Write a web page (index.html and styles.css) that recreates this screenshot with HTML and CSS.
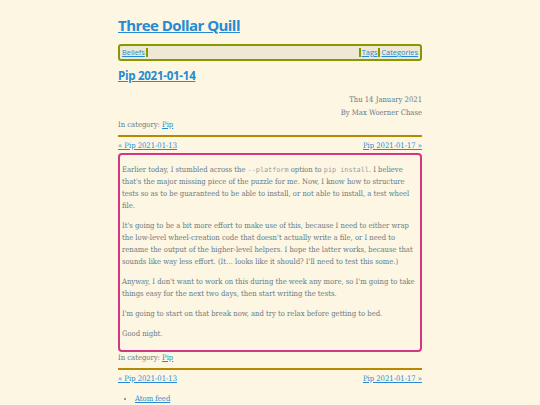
FILE: index.html
```html
<!DOCTYPE html>
<html>
<head>
<meta charset="utf-8">
<title>Pip 2021-01-14</title>
<link rel="stylesheet" href="styles.css">
</head>
<body>
<div class="page">
  <header class="site-header">
    <h1 class="site-title"><a href="#">Three Dollar Quill</a></h1>
    <nav class="site-nav">
      <a class="nav-item" href="#">Beliefs</a>
      <span class="nav-fill"></span>
      <a class="nav-item nav-sep" href="#">Tags</a>
      <a class="nav-item nav-sep" href="#">Categories</a>
    </nav>
  </header>
  <article class="post">
    <h2 class="post-title"><a href="#">Pip 2021-01-14</a></h2>
    <div class="post-meta">
      <div>Thu 14 January 2021</div>
      <div>By Max Woerner Chase</div>
    </div>
    <div class="category">In category: <a href="#">Pip</a></div>
    <hr class="rule">
    <div class="pager">
      <a href="#">« Pip 2021-01-13</a>
      <a href="#">Pip 2021-01-17 »</a>
    </div>
    <div class="post-body">
      <p>Earlier today, I stumbled across the <code>--platform</code> option to <code>pip install</code>. I believe that's the major missing piece of the puzzle for me. Now, I know how to structure tests so as to be guaranteed to be able to install, or not able to install, a test wheel file.</p>
      <p>It's going to be a bit more effort to make use of this, because I need to either wrap the low-level wheel-creation code that doesn't actually write a file, or I need to rename the output of the higher-level helpers. I hope the latter works, because that sounds like way less effort. (It… looks like it should? I'll need to test this some.)</p>
      <p>Anyway, I don't want to work on this during the week any more, so I'm going to take things easy for the next two days, then start writing the tests.</p>
      <p>I'm going to start on that break now, and try to relax before getting to bed.</p>
      <p>Good night.</p>
    </div>
    <div class="category">In category: <a href="#">Pip</a></div>
    <hr class="rule">
    <div class="pager">
      <a href="#">« Pip 2021-01-13</a>
      <a href="#">Pip 2021-01-17 »</a>
    </div>
  </article>
  <ul class="feeds">
    <li><a href="#">Atom feed</a></li>
  </ul>
</div>
</body>
</html>
```

FILE: styles.css
```css
html, body {
  margin: 0;
  padding: 0;
}
body {
  background: #fdf6e3;
  color: #657b83;
  font-family: "DejaVu Serif", "Liberation Serif", serif;
  font-stretch: condensed;
  font-size: 7.6px;
  line-height: 12px;
}
a {
  color: #268bd2;
}
.page {
  width: 304px;
  margin: 0 auto;
  padding-top: 14px;
}
.site-title {
  margin: 0;
  font-family: "Open Sans", "Noto Sans", sans-serif;
  font-stretch: normal;
  font-weight: 700;
  font-size: 15px;
  line-height: 22px;
  letter-spacing: -0.55px;
}
.site-nav {
  display: flex;
  margin-top: 8px;
  border: 2px solid #859900;
  border-radius: 3px;
  background: #eee8d5;
  padding: 2px 1px;
  font-family: "Open Sans", "Noto Sans", sans-serif;
  font-stretch: normal;
  font-size: 7.4px;
  line-height: 9px;
}
.nav-item {
  padding: 0 1px;
}
.nav-fill {
  flex: 1;
  border-left: 2px solid #859900;
  border-right: 2px solid #859900;
}
.nav-sep + .nav-sep {
  border-left: 2px solid #859900;
}
.post-title {
  margin: 6px 0 0;
  font-family: "Open Sans", "Noto Sans", sans-serif;
  font-stretch: normal;
  font-weight: 700;
  font-size: 11.6px;
  line-height: 18px;
  letter-spacing: -0.3px;
}
.post-meta {
  margin-top: 9px;
  text-align: right;
  line-height: 12.5px;
}
.category {
  line-height: 12px;
}
.rule {
  margin: 4px 0 3px;
  border: 0;
  height: 2px;
  background: #b58900;
}
.pager {
  display: flex;
  justify-content: space-between;
  line-height: 12px;
}
.post-body {
  margin-top: 1px;
  border: 2px solid #d33682;
  border-radius: 4px;
  padding: 1px 2px 2px;
}
.post-body p {
  margin: 8px 0;
}
code {
  font-family: "DejaVu Sans Mono", "Liberation Mono", monospace;
  font-stretch: normal;
  font-size: 6.8px;
  line-height: 1;
  color: #93a1a1;
}
.feeds {
  margin: 8px 0 0;
  padding-left: 17px;
}
```
